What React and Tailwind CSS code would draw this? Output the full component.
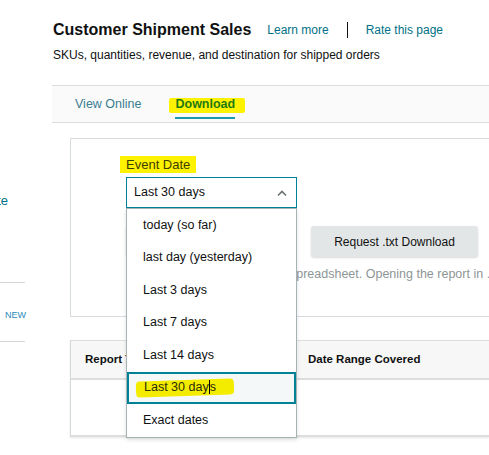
import React from 'react';

const options = [
    'today (so far)',
    'last day (yesterday)',
    'Last 3 days',
    'Last 7 days',
    'Last 14 days',
    'Last 30 days',
    'Exact dates',
];

const ChevronUp = () => (
    <svg width="12" height="8" viewBox="0 0 12 8" fill="none">
        <path d="M2 6.5 L6 2.5 L10 6.5" stroke="#6b7475" strokeWidth="1.6" />
    </svg>
);

const Sidebar = () => (
    <div className="w-[52px] shrink-0 overflow-hidden text-[13px]">
        <div className="h-[192px]" />
        <div className="-ml-[10px] leading-[18px] text-[#007185]">ate</div>
        <div className="h-[72px]" />
        <div className="w-[25px] border-t border-[#d5d9d9]" />
        <div className="h-[26px]" />
        <div className="pl-[5px] text-[9px] leading-[12px] text-[#2a8ab8]">NEW</div>
        <div className="h-[20px]" />
        <div className="w-[25px] border-t border-[#d5d9d9]" />
    </div>
);

const DateSelect = () => (
    <div className="relative w-[171px]">
        <div className="flex h-[31px] items-center justify-between border border-[#008296] bg-white pl-[7px] pr-[8px] text-[12.5px] text-[#0f1111]">
            <span>Last 30 days</span>
            <ChevronUp />
        </div>
        <div className="absolute left-0 top-full z-10 w-[171px] border border-[#a6b3b5] bg-white shadow-[0_2px_4px_rgba(0,0,0,0.12)]">
            {options.map((opt) => {
                const selected = opt === 'Last 30 days';
                return (
                    <div
                        key={opt}
                        className={
                            selected
                                ? 'flex h-[32.5px] items-center border-2 border-[#008296] bg-[#f5f8f8] pl-[15px] text-[12.5px] text-[#2b2b06]'
                                : 'flex h-[32.5px] items-center pl-[16px] text-[12.5px] text-[#0f1111]'
                        }
                    >
                        {selected ? (
                            <span className="relative">
                                <span className="absolute -left-[8px] -right-[18px] top-[2px] h-[16px] -rotate-2 rounded-[4px] bg-[#f4ec00]" />
                                <span className="relative">
                                    Last 30 day<span className="border-l border-black" />s
                                </span>
                            </span>
                        ) : (
                            opt
                        )}
                    </div>
                );
            })}
        </div>
    </div>
);

export default function App() {
    return (
        <div
            className="flex h-[455px] w-full overflow-hidden bg-white"
            style={{ fontFamily: '"Liberation Sans", Arial, sans-serif' }}
        >
            <Sidebar />
            <div className="min-w-0 flex-1">
                {/* Header */}
                <div className="flex items-center pt-[19px] pl-[1px]">
                    <h1 className="text-[16px] font-bold leading-[22px] text-[#0f1111]">Customer Shipment Sales</h1>
                    <a className="ml-[16px] text-[12px] text-[#007185]">Learn more</a>
                    <span className="ml-[18px] h-[16px] border-l border-[#0f1111]" />
                    <a className="ml-[18px] text-[12px] text-[#007185]">Rate this page</a>
                </div>
                <p className="mt-[5px] pl-[1px] text-[12px] leading-[18px] text-[#0f1111]">
                    SKUs, quantities, revenue, and destination for shipped orders
                </p>

                {/* Tabs */}
                <div className="mt-[21px] flex h-[38px] items-stretch border-y border-[#dddddd] bg-[#fafafa] pl-[23px] text-[12.5px]">
                    <div className="flex items-center text-[#3b7d91]">View Online</div>
                    <div className="relative ml-[34px] flex items-center">
                        <span className="absolute -left-[6px] -right-[10px] top-[12px] h-[15px] rounded-[2px] bg-[#fff200]" />
                        <span className="relative font-bold text-[#1f7a12]">Download</span>
                        <span className="absolute bottom-[3px] left-0 right-0 h-[2px] bg-[#1a9aa8]" />
                    </div>
                </div>

                {/* Request card */}
                <div className="ml-[18px] mt-[15px] h-[179px] border-y border-l border-[#d5dbdb] pl-[55px] pt-[17px]">
                    <div className="text-[13px] leading-[18px]">
                        <span className="-ml-[6px] bg-[#fff200] px-[6px] py-[1px] text-[#3d3d00]">Event Date</span>
                    </div>
                    <div className="mt-[3px]">
                        <DateSelect />
                    </div>
                    <div className="mt-[18px] flex gap-[18px]">
                        <button className="h-[31px] w-[167px] shrink-0 rounded-[3px] bg-[#e3e6e6] text-[12px] text-[#0f1111] shadow-[0_1px_2px_rgba(0,0,0,0.15)]">
                            Request .csv Download
                        </button>
                        <button className="h-[31px] w-[167px] shrink-0 rounded-[3px] bg-[#e3e6e6] text-[12px] text-[#0f1111] shadow-[0_1px_2px_rgba(0,0,0,0.15)]">
                            Request .txt Download
                        </button>
                    </div>
                    <p className="mt-[8px] whitespace-nowrap text-[12.5px] leading-[18px] text-[#8d9696]">
                        Use the .txt format to open in spreadsheet. Opening the report in .csv may change values.
                    </p>
                </div>

                {/* Table */}
                <div className="ml-[18px] mt-[23px] border-l border-[#d5dbdb] text-[11.5px] shadow-[0_1px_2px_rgba(0,0,0,0.1)]">
                    <div className="flex h-[40px] items-center border-t border-b-2 border-[#dddddd] bg-[#f7f7f7] font-bold text-[#0f1111]">
                        <div className="w-[223px] pl-[14px]">Report Type</div>
                        <div className="pl-[14px]">Date Range Covered</div>
                    </div>
                    <div className="h-[57px] border-b-2 border-[#dddddd] bg-white" />
                </div>
            </div>
        </div>
    );
}
